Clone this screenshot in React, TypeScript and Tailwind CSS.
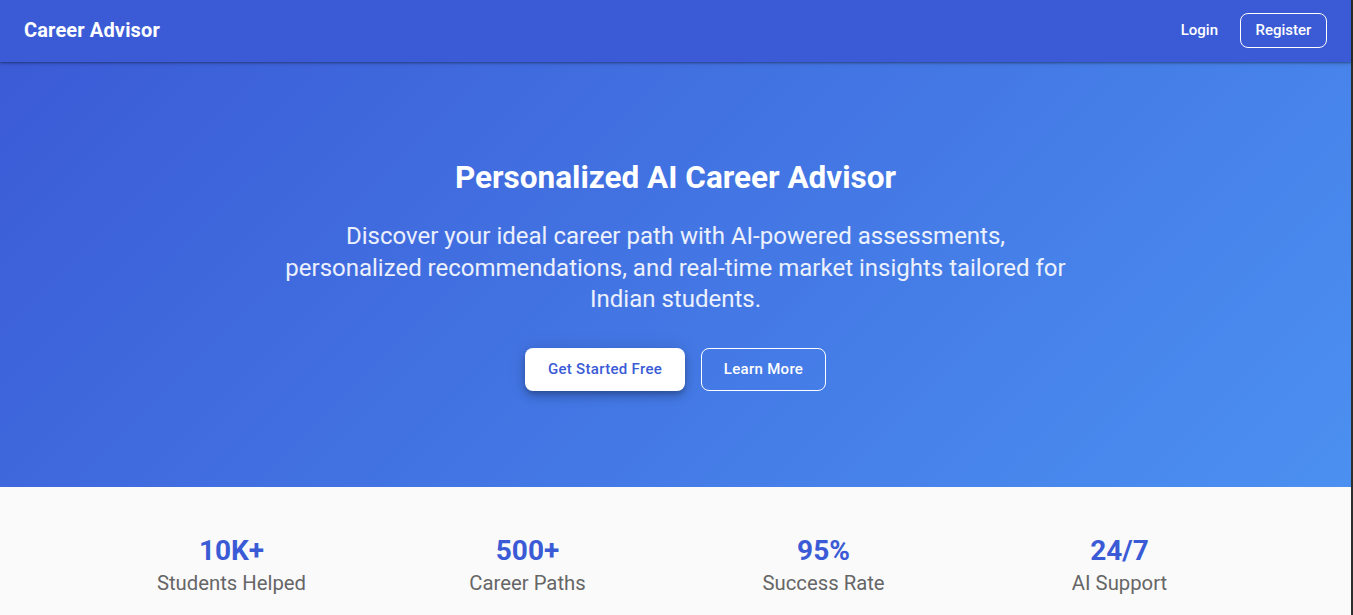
import React from "react";

export default function App() {
  const stats = [
    { n: "10K+", l: "Students Helped" },
    { n: "500+", l: "Career Paths" },
    { n: "95%", l: "Success Rate" },
    { n: "24/7", l: "AI Support" },
  ];
  return (
    <div className="flex h-[615px] w-full overflow-hidden" style={{ fontFamily: "Roboto, 'Noto Sans', sans-serif" }}>
      <div className="flex-1 flex flex-col bg-[#fafafa]">
        <header className="relative z-10 h-[62px] pb-[2px] bg-[#3b5bd6] flex items-center justify-between px-6 shadow-[0_1px_2px_0_rgba(0,0,0,0.35),0_2px_4px_0_rgba(0,0,0,0.1)]">
          <div className="text-white text-[20px] font-bold tracking-[0.15px]">Career Advisor</div>
          <div className="flex items-center gap-[14px]">
            <button className="text-white text-[15px] font-medium px-2 py-[6px]">Login</button>
            <button className="text-white text-[15px] font-medium border border-white rounded-lg h-[35px] w-[87px]">Register</button>
          </div>
        </header>
        <section className="h-[425px] bg-[linear-gradient(135deg,#3b5bd6_0%,#4b90f1_100%)] flex flex-col items-center pt-[97px]">
          <h1 className="text-white text-[31.5px] font-bold leading-[38px] text-center">Personalized AI Career Advisor</h1>
          <p className="mt-[24px] text-white/90 text-[24px] leading-[31.5px] text-center max-w-[788px]">
            Discover your ideal career path with AI-powered assessments, personalized recommendations, and real-time market insights tailored for Indian students.
          </p>
          <div className="mt-[32px] flex gap-4">
            <button className="bg-white text-[#3b5bd6] text-[15px] font-medium tracking-[0.3px] rounded-lg h-[43px] w-[160px] shadow-[0_3px_5px_-1px_rgba(0,0,0,0.2),0_6px_10px_0_rgba(0,0,0,0.14),0_1px_18px_0_rgba(0,0,0,0.12)]">Get Started Free</button>
            <button className="text-white text-[15px] font-medium tracking-[0.3px] rounded-lg h-[43px] w-[125px] border border-white">Learn More</button>
          </div>
        </section>
        <section className="flex-1 bg-[#fafafa] flex justify-center pt-[47px]">
          <div className="grid grid-cols-4 w-[1184px]">
            {stats.map((s) => (
              <div key={s.n} className="flex flex-col items-center">
                <div className="text-[#3b5bd6] text-[28px] font-bold leading-[34px]">{s.n}</div>
                <div className="text-[#666666] text-[20.3px] leading-[28px] mt-[1px]">{s.l}</div>
              </div>
            ))}
          </div>
        </section>
      </div>
      <div className="w-[2px] bg-[#2e2e2e]" />
    </div>
  );
}
